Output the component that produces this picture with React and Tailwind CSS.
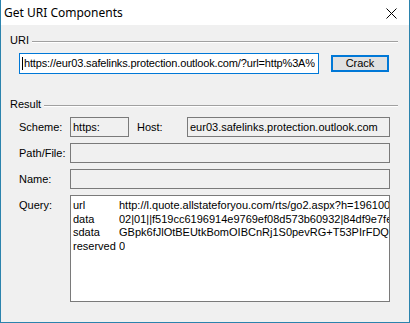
import React from 'react';

const rows = [
  ['url', 'http://l.quote.allstateforyou.com/rts/go2.aspx?h=196100'],
  ['data', '02|01||f519cc6196914e9769ef08d573b60932|84df9e7fe9'],
  ['sdata', 'GBpk6fJlOtBEUtkBomOIBCnRj1S0pevRG+T53PIrFDQ='],
  ['reserved', '0'],
];

function Field({ children, className = '' }) {
  return (
    <div className={`h-[20px] border border-[#7a7a7a] bg-[#f0f0f0] flex items-center pl-[2px] whitespace-nowrap overflow-hidden ${className}`}>
      {children}
    </div>
  );
}

function GroupHeader({ label, className = '' }) {
  return (
    <div className={`flex items-center pl-[9px] pr-[11px] h-[13px] ${className}`}>
      <span className="leading-[13px]">{label}</span>
      <div className="flex-1 ml-[3px] mt-[2px] border-t border-[#a0a0a0] border-b border-b-white" />
    </div>
  );
}

export default function App() {
  return (
    <div
      className="w-[410px] h-[323px] bg-[#f0f0f0] border-x border-b border-[#2b83ad] flex flex-col text-[11px] text-black overflow-hidden"
      style={{ fontFamily: '"Liberation Sans", Arial, sans-serif' }}
    >
      {/* Title bar */}
      <div className="h-[25px] bg-white flex items-center justify-between pl-[3px] pr-[12px] shrink-0">
        <span className="text-[12px] leading-none" style={{ fontFamily: '"Noto Sans", sans-serif' }}>Get URI Components</span>
        <svg width="11" height="11" viewBox="0 0 11 11" className="mt-[1px]">
          <path d="M0.5 0.5 L10.5 10.5 M10.5 0.5 L0.5 10.5" stroke="#000" strokeWidth="1" />
        </svg>
      </div>

      {/* URI group */}
      <GroupHeader label="URI" className="mt-[9px]" />
      <div className="flex items-center mt-[6px] pl-[18px]">
        <div className="w-[300px] h-[21px] border border-[#0078d7] bg-white flex items-center pl-[2px] whitespace-nowrap overflow-hidden tracking-[-0.15px]">
          <span className="w-px h-[13px] bg-black mr-[1px] shrink-0" />
          <span className="overflow-hidden">https://eur03.safelinks.protection.outlook.com/?url=http%3A%</span>
        </div>
        <button className="ml-[12px] w-[58px] h-[17px] border-2 border-[#0078d7] bg-[#e1e1e1] flex items-center justify-center leading-none">
          Crack
        </button>
      </div>

      {/* Result group */}
      <GroupHeader label="Result" className="mt-[24px]" />
      <div className="flex items-center mt-[6px] pl-[18px]">
        <span className="w-[51px]">Scheme:</span>
        <Field className="w-[59px]">https:</Field>
        <span className="ml-[8px] w-[50px]">Host:</span>
        <Field className="w-[203px]">eur03.safelinks.protection.outlook.com</Field>
      </div>
      <div className="flex items-center mt-[6px] pl-[18px]">
        <span className="w-[51px]">Path/File:</span>
        <Field className="w-[320px]" />
      </div>
      <div className="flex items-center mt-[6px] pl-[18px]">
        <span className="w-[51px]">Name:</span>
        <Field className="w-[320px]" />
      </div>
      <div className="flex items-start mt-[6px] pl-[18px]">
        <span className="w-[51px] pt-[4px] leading-[13px]">Query:</span>
        <div className="w-[320px] h-[107px] border border-[#7a7a7a] bg-white pt-[3px] pl-[2px] overflow-hidden">
          {rows.map(([k, v]) => (
            <div key={k} className="flex leading-[13.5px] whitespace-nowrap overflow-hidden">
              <span className="w-[46px] shrink-0">{k}</span>
              <span className="overflow-hidden">{v}</span>
            </div>
          ))}
        </div>
      </div>
    </div>
  );
}
